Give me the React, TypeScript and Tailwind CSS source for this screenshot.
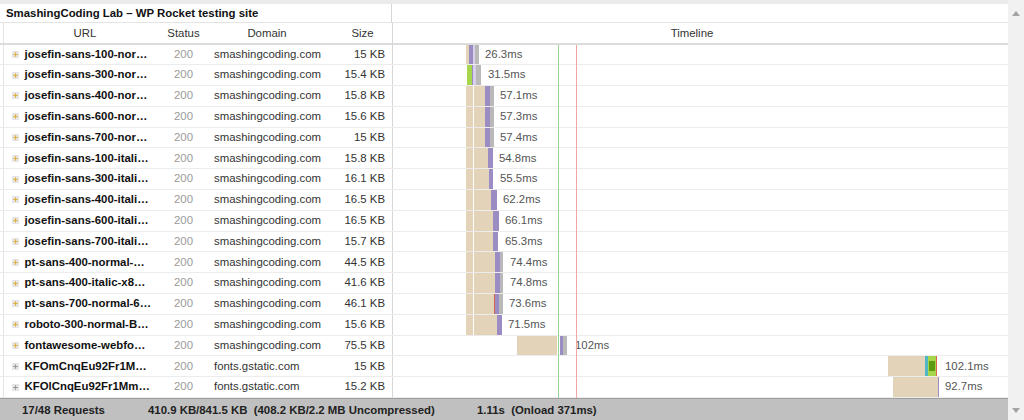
import React from 'react';

type Seg = [number, number, string, boolean?];

const TAN = '#e2d3b9';
const PUR = '#9b8dc3';
const GRY = '#b9b9b9';
const LAV = '#d8d0e8';
const LGR = '#a5d64c';
const TEAL = '#4fb6c6';
const RED = '#d9644f';

// x values are page pixels; timeline column starts at 393
const T0 = 393;

const tanSplit = (end: number): Seg[] => [
  [466, 473, TAN],
  [474, end, TAN],
];

type Row = {
  name: string;
  domain: string;
  size: string;
  segs: Seg[];
  label: string;
  lx: number;
};

const SC = 'smashingcoding.com';
const GS = 'fonts.gstatic.com';

const rows: Row[] = [
  { name: 'josefin-sans-100-nor…', domain: SC, size: '15 KB', segs: [[466, 469.3, TAN], [469.3, 473.3, PUR], [473.3, 475.3, LAV], [475.3, 479, GRY]], label: '26.3ms', lx: 485 },
  { name: 'josefin-sans-300-nor…', domain: SC, size: '15.4 KB', segs: [[466.7, 472, LGR], [472, 473.3, PUR], [473.3, 476, LAV], [476, 480.7, GRY]], label: '31.5ms', lx: 488 },
  { name: 'josefin-sans-400-nor…', domain: SC, size: '15.8 KB', segs: [...tanSplit(485), [485, 490, PUR], [490, 494, GRY]], label: '57.1ms', lx: 500 },
  { name: 'josefin-sans-600-nor…', domain: SC, size: '15.6 KB', segs: [...tanSplit(485), [485, 490, PUR], [490, 494, GRY]], label: '57.3ms', lx: 500 },
  { name: 'josefin-sans-700-nor…', domain: SC, size: '15 KB', segs: [...tanSplit(485), [485, 490, PUR], [490, 494, GRY]], label: '57.4ms', lx: 500 },
  { name: 'josefin-sans-100-itali…', domain: SC, size: '15.8 KB', segs: [...tanSplit(487.7), [487.7, 492.7, PUR]], label: '54.8ms', lx: 499 },
  { name: 'josefin-sans-300-itali…', domain: SC, size: '16.1 KB', segs: [...tanSplit(488.7), [488.7, 493.3, PUR]], label: '55.5ms', lx: 500 },
  { name: 'josefin-sans-400-itali…', domain: SC, size: '16.5 KB', segs: [...tanSplit(491), [491, 496.7, PUR]], label: '62.2ms', lx: 503 },
  { name: 'josefin-sans-600-itali…', domain: SC, size: '16.5 KB', segs: [...tanSplit(493.3), [493.3, 498.7, PUR]], label: '66.1ms', lx: 505 },
  { name: 'josefin-sans-700-itali…', domain: SC, size: '15.7 KB', segs: [...tanSplit(493.3), [493.3, 498.3, PUR]], label: '65.3ms', lx: 505 },
  { name: 'pt-sans-400-normal-…', domain: SC, size: '44.5 KB', segs: [...tanSplit(495), [495, 500, PUR], [500, 503.3, GRY]], label: '74.4ms', lx: 510 },
  { name: 'pt-sans-400-italic-x8…', domain: SC, size: '41.6 KB', segs: [...tanSplit(495), [495, 500, PUR], [500, 503.3, GRY]], label: '74.8ms', lx: 510 },
  { name: 'pt-sans-700-normal-6…', domain: SC, size: '46.1 KB', segs: [...tanSplit(493.7), [493.7, 494.7, RED], [494.7, 499.3, PUR], [499.3, 503.3, GRY]], label: '73.6ms', lx: 509 },
  { name: 'roboto-300-normal-B…', domain: SC, size: '15.6 KB', segs: [...tanSplit(496.7), [496.7, 501.7, PUR]], label: '71.5ms', lx: 508 },
  { name: 'fontawesome-webfo…', domain: SC, size: '75.5 KB', segs: [[516.7, 557.3, TAN], [560, 563.3, PUR], [563.3, 567.3, GRY]], label: '102ms', lx: 575 },
  { name: 'KFOmCnqEu92Fr1M…', domain: GS, size: '15 KB', segs: [[887.7, 925, TAN], [925, 927.7, TEAL], [927.7, 936, LGR, true], [936, 937.3, RED]], label: '102.1ms', lx: 945 },
  { name: 'KFOlCnqEu92Fr1Mm…', domain: GS, size: '15.2 KB', segs: [[893.3, 937.7, TAN], [937.7, 938.7, PUR]], label: '92.7ms', lx: 945 },
];

const PlusIcon = ({ muted }: { muted: boolean }) => (
  <svg width="7" height="7" viewBox="0 0 7 7" className="ml-[8px] shrink-0">
    <rect x="0" y="0" width="7" height="7" fill="#e6e6e6" />
    <path d="M3.5 1.2V5.8M1.2 3.5H5.8" stroke={muted ? '#9a9a9a' : '#e0b040'} strokeWidth="1.1" />
  </svg>
);

const TimelineRow = ({ row }: { row: Row }) => (
  <div className="relative flex-1 border-l border-[#d6d6d6]">
    {row.segs.map(([a, b, color, inner], i) => (
      <div
        key={i}
        className="absolute top-0 bottom-0"
        style={{ left: a - T0, width: b - a, background: color }}
      >
        {inner && <div className="absolute top-[5px] bottom-[5px] left-[1.5px] right-[1px] bg-[#5c9a12]" />}
      </div>
    ))}
    <span className="absolute top-0 bottom-0 flex items-center text-[#555]" style={{ left: row.lx - T0 }}>
      {row.label}
    </span>
  </div>
);

export default function App() {
  return (
    <div className="flex h-[420px] w-[1024px] overflow-hidden bg-white font-['Liberation_Sans',Arial,sans-serif] text-[11.4px] leading-none">
      <div className="flex min-w-0 flex-1 flex-col">
        <div className="h-[4px] shrink-0 bg-[#ebebeb]" />

        <div className="flex h-[19px] shrink-0 border-b border-[#e4e4e4]">
          <div className="flex w-[392px] items-center border-r border-[#d6d6d6] pt-[2px] pl-[6px] font-bold text-[#111]">
            SmashingCoding Lab – WP Rocket testing site
          </div>
          <div className="flex-1" />
        </div>

        <div className="flex h-[21.5px] shrink-0 border-b-2 border-[#dcdcdc] text-[#333]">
          <div className="ml-[3px] flex w-[389px] items-center border-l border-[#e3e3e3] pt-[2px]">
            <div className="w-[162px] text-center">URL</div>
            <div className="w-[35px] text-center">Status</div>
            <div className="w-[132px] text-center">Domain</div>
            <div className="w-[59px] text-center">Size</div>
          </div>
          <div className="flex flex-1 items-center justify-center border-l border-[#d6d6d6] pt-[2px] pr-[17px]">Timeline</div>
        </div>

        <div className="relative shrink-0">
          {rows.map((row) => (
            <div key={row.name} className="flex h-[20.8px] border-b border-[#ececec]">
              <div className="ml-[3px] flex w-[389px] items-center border-l border-[#e3e3e3]">
                <div className="flex w-[162px] items-center">
                  <PlusIcon muted={row.domain === GS} />
                  <span className="ml-[5.5px] font-bold whitespace-nowrap text-[#111]">{row.name}</span>
                </div>
                <div className="w-[35px] text-center text-[#9a9a9a]">200</div>
                <div className="w-[132px] pl-[13px] whitespace-nowrap text-[#333]">{row.domain}</div>
                <div className="w-[59px] pr-[7px] text-right whitespace-nowrap text-[#333]">{row.size}</div>
              </div>
              <TimelineRow row={row} />
            </div>
          ))}
          <div className="absolute top-0 bottom-0 left-[558px] w-px bg-[#98d698]" />
          <div className="absolute top-0 bottom-0 left-[576px] w-px bg-[#f3a5a5]" />
        </div>

        <div className="flex flex-1 items-center border-t border-[#9d9d9d] bg-[#c0c0c0] pt-[2px] font-bold text-[#222]">
          <span className="w-[148px] pl-[22px]">17/48 Requests</span>
          <span className="w-[329px] whitespace-pre">410.9 KB/841.5 KB  (408.2 KB/2.2 MB Uncompressed)</span>
          <span className="whitespace-pre">1.11s  (Onload 371ms)</span>
        </div>
      </div>

      <div className="flex w-[16px] shrink-0 flex-col items-center justify-between bg-[#f1f1f1] pt-[11px] pb-[7px]">
        <svg width="8" height="5" viewBox="0 0 8 5">
          <polygon points="4,0 8,5 0,5" fill="#a3a3a3" />
        </svg>
        <svg width="8" height="5" viewBox="0 0 8 5">
          <polygon points="0,0 8,0 4,5" fill="#a3a3a3" />
        </svg>
      </div>
    </div>
  );
}
